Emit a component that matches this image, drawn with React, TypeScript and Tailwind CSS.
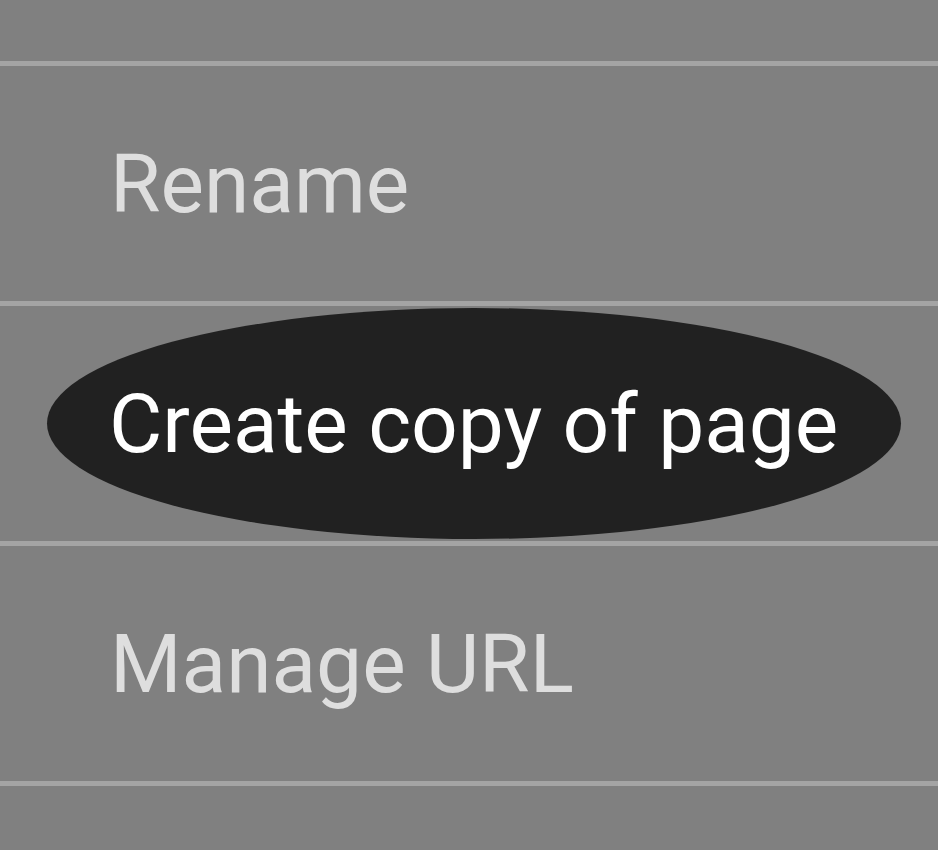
const items = ["Rename", "Create copy of page", "Manage URL"];

export default function App() {
  return (
    <div
      className="h-[850px] w-[938px] overflow-hidden bg-[#808080]"
      style={{ fontFamily: "Roboto, 'Noto Sans', sans-serif" }}
    >
      <div className="h-[61px]" />
      {items.map((label, i) => (
        <div key={label} className="border-t-[5px] border-[#a4a4a4]">
          <div className="flex h-[235px] items-center">
            {i === 1 ? (
              <div className="ml-[47px] flex h-[231px] w-[854px] items-center rounded-[50%] bg-[#212121] pl-[62px]">
                <span className="text-[82px] leading-none text-white">{label}</span>
              </div>
            ) : (
              <span className="pl-[110px] text-[82px] leading-none text-[#dedede]">{label}</span>
            )}
          </div>
        </div>
      ))}
      <div className="border-t-[5px] border-[#a4a4a4]" />
    </div>
  );
}
